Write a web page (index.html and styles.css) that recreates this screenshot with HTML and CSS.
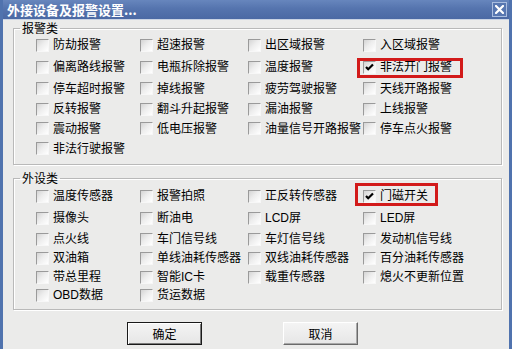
FILE: index.html
```html
<!DOCTYPE html>
<html lang="zh-CN">
<head>
<meta charset="utf-8">
<title>外接设备及报警设置</title>
<link rel="stylesheet" href="styles.css">
</head>
<body>
<div class="window">
  <div class="titlebar">
    <span class="title">外接设备及报警设置...</span>
    <span class="close"><svg width="9" height="9" viewBox="0 0 9 9"><path d="M1 1L8 8M8 1L1 8" stroke="#fff" stroke-width="2.2" stroke-linecap="square"/></svg></span>
  </div>
  <div class="client">
    <fieldset class="group alarms">
      <legend>报警类</legend>
      <div class="grid">
        <label class="item"><span class="cb"></span>防劫报警</label>
        <label class="item"><span class="cb"></span>超速报警</label>
        <label class="item"><span class="cb"></span>出区域报警</label>
        <label class="item"><span class="cb"></span>入区域报警</label>
        <label class="item"><span class="cb"></span>偏离路线报警</label>
        <label class="item"><span class="cb"></span>电瓶拆除报警</label>
        <label class="item"><span class="cb"></span>温度报警</label>
        <label class="item flag flag-a"><span class="cb checked"><svg width="11" height="11" viewBox="0 0 11 11"><path d="M2 5L4.2 7.3L9 2.5" fill="none" stroke="#000" stroke-width="2.2"/></svg></span>非法开门报警</label>
        <label class="item"><span class="cb"></span>停车超时报警</label>
        <label class="item"><span class="cb"></span>掉线报警</label>
        <label class="item"><span class="cb"></span>疲劳驾驶报警</label>
        <label class="item"><span class="cb"></span>天线开路报警</label>
        <label class="item"><span class="cb"></span>反转报警</label>
        <label class="item"><span class="cb"></span>翻斗升起报警</label>
        <label class="item"><span class="cb"></span>漏油报警</label>
        <label class="item"><span class="cb"></span>上线报警</label>
        <label class="item"><span class="cb"></span>震动报警</label>
        <label class="item"><span class="cb"></span>低电压报警</label>
        <label class="item"><span class="cb"></span>油量信号开路报警</label>
        <label class="item"><span class="cb"></span>停车点火报警</label>
        <label class="item"><span class="cb"></span>非法行驶报警</label>
      </div>
    </fieldset>
    <fieldset class="group devices">
      <legend>外设类</legend>
      <div class="grid">
        <label class="item"><span class="cb"></span>温度传感器</label>
        <label class="item"><span class="cb"></span>报警拍照</label>
        <label class="item"><span class="cb"></span>正反转传感器</label>
        <label class="item flag flag-b"><span class="cb checked"><svg width="11" height="11" viewBox="0 0 11 11"><path d="M2 5L4.2 7.3L9 2.5" fill="none" stroke="#000" stroke-width="2.2"/></svg></span>门磁开关</label>
        <label class="item"><span class="cb"></span>摄像头</label>
        <label class="item"><span class="cb"></span>断油电</label>
        <label class="item"><span class="cb"></span>LCD屏</label>
        <label class="item"><span class="cb"></span>LED屏</label>
        <label class="item"><span class="cb"></span>点火线</label>
        <label class="item"><span class="cb"></span>车门信号线</label>
        <label class="item"><span class="cb"></span>车灯信号线</label>
        <label class="item"><span class="cb"></span>发动机信号线</label>
        <label class="item"><span class="cb"></span>双油箱</label>
        <label class="item"><span class="cb"></span>单线油耗传感器</label>
        <label class="item"><span class="cb"></span>双线油耗传感器</label>
        <label class="item"><span class="cb"></span>百分油耗传感器</label>
        <label class="item"><span class="cb"></span>带总里程</label>
        <label class="item"><span class="cb"></span>智能IC卡</label>
        <label class="item"><span class="cb"></span>载重传感器</label>
        <label class="item"><span class="cb"></span>熄火不更新位置</label>
        <label class="item"><span class="cb"></span>OBD数据</label>
        <label class="item"><span class="cb"></span>货运数据</label>
      </div>
    </fieldset>
    <div class="buttons">
      <button class="btn default">确定</button>
      <button class="btn">取消</button>
    </div>
  </div>
</div>
</body>
</html>
```

FILE: styles.css
```css
* { box-sizing: border-box; }
html, body {
  margin: 0;
  padding: 0;
  background: #ebebea;
}
body {
  font-family: "Liberation Sans", "Noto Sans CJK SC", sans-serif;
  font-size: 12px;
  color: #000;
  width: 512px;
  height: 349px;
  overflow: hidden;
}
.window {
  width: 512px;
  height: 349px;
  border-left: 3px solid #5073ae;
  border-right: 3px solid #5073ae;
  background: #ebebea;
}
.titlebar {
  height: 20px;
  display: flex;
  align-items: center;
  justify-content: space-between;
  padding: 0 2px 0 4px;
  background: linear-gradient(#6786bd, #5574ae 45%, #4b69a4);
  border-bottom: 1px solid #c9d3e4;
}
.title {
  color: #fff;
  font-weight: bold;
  font-size: 13px;
  line-height: 20px;
  font-family: "Noto Sans CJK SC", sans-serif;
}
.close {
  width: 15px;
  height: 15px;
  display: flex;
  align-items: center;
  justify-content: center;
  border: 1px solid #a9bddf;
  background: #5877b1;
}
.client {
  padding: 2px 7px 0 10px;
}
.group {
  margin: 0;
  padding: 0 0 5px 22px;
  border: 1px solid #b9b9b9;
  box-shadow: inset 1px 1px 0 #fff, 1px 1px 0 #fff;
  min-width: 0;
}
.group legend {
  padding: 0 2px;
  margin-left: -16px;
  line-height: 12px;
  font-size: 12px;
  font-family: "Noto Sans CJK SC", sans-serif;
}
.devices {
  margin-top: 7px;
  padding-top: 1px;
  padding-bottom: 6px;
}
.grid {
  display: grid;
  grid-template-columns: 104px 108px 115px 1fr;
}
.alarms .grid { grid-template-rows: 22px 22px 21px 20px 19px 21px; }
.devices .grid { grid-template-rows: 22px 22px 20px 18px 20px 16px; }
.item {
  display: flex;
  align-items: center;
  gap: 4px;
  white-space: nowrap;
  line-height: 14px;
}
.cb {
  flex: none;
  width: 13px;
  height: 13px;
  border: 1px solid;
  border-color: #9a9a9a #f7f7f7 #f7f7f7 #9a9a9a;
  background: linear-gradient(135deg, #d4d4d4 0%, #ededed 45%, #fff 100%);
  display: flex;
  align-items: center;
  justify-content: center;
}
.flag { position: relative; }
.flag::after {
  content: "";
  position: absolute;
  border: 3px solid #d21a1a;
  pointer-events: none;
}
.flag-a::after { left: -6px; top: 2px; bottom: 0; width: 100px; }
.flag-b::after { left: -8px; top: -2px; bottom: 1px; width: 77px; }
.buttons {
  display: flex;
  gap: 81px;
  padding-left: 114px;
  margin-top: 12px;
}
.btn {
  width: 75px;
  height: 23px;
  padding: 0;
  font: 12px "Noto Sans CJK SC", sans-serif;
  color: #000;
  background: linear-gradient(#f4f4f4, #e6e6e6);
  border: 1px solid;
  border-color: #fff #6a6a6a #6a6a6a #fff;
  box-shadow: inset -1px -1px 0 #a8a8a8;
}
.btn.default {
  border: 1px solid #1a1a1a;
  box-shadow: inset 1px 1px 0 #fff, inset -1px -1px 0 #7a7a7a;
}
```
